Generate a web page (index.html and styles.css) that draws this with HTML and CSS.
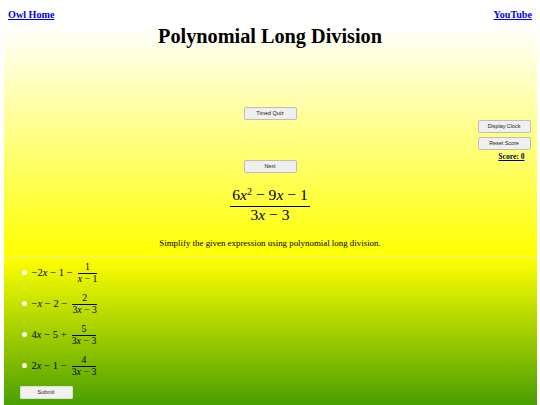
FILE: index.html
```html
<!DOCTYPE html>
<html lang="en">
<head>
<meta charset="utf-8">
<title>Polynomial Long Division</title>
<link rel="stylesheet" href="styles.css">
</head>
<body>
<nav class="topnav">
  <a href="#">Owl Home</a>
  <a href="#">YouTube</a>
</nav>
<main class="page">
  <section class="upper">
    <h1>Polynomial Long Division</h1>
    <div class="controls">
      <div class="center-col">
        <button class="btn">Timed Quiz</button>
        <button class="btn">Next</button>
      </div>
      <div class="side-col">
        <button class="btn">Display Clock</button>
        <button class="btn">Reset Score</button>
        <a class="score" href="#">Score: 0</a>
      </div>
    </div>
    <div class="problem">
      <span class="frac">
        <span class="num">6<i>x</i><sup>2</sup> − 9<i>x</i> − 1</span>
        <span class="den">3<i>x</i> − 3</span>
      </span>
    </div>
    <p class="prompt">Simplify the given expression using polynomial long division.</p>
  </section>
  <hr class="rule">
  <section class="lower">
    <form class="answers">
      <label class="answer"><span class="radio"></span><span class="expr">−2<i>x</i> − 1 −</span><span class="frac small"><span class="num">1</span><span class="den"><i>x</i> − 1</span></span></label>
      <label class="answer"><span class="radio"></span><span class="expr">−<i>x</i> − 2 −</span><span class="frac small"><span class="num">2</span><span class="den">3<i>x</i> − 3</span></span></label>
      <label class="answer"><span class="radio"></span><span class="expr">4<i>x</i> − 5 +</span><span class="frac small"><span class="num">5</span><span class="den">3<i>x</i> − 3</span></span></label>
      <label class="answer"><span class="radio"></span><span class="expr">2<i>x</i> − 1 −</span><span class="frac small"><span class="num">4</span><span class="den">3<i>x</i> − 3</span></span></label>
    </form>
    <button class="btn submit">Submit</button>
  </section>
</main>
</body>
</html>
```
FILE: styles.css
```css
* { box-sizing: border-box; }
html, body { margin: 0; padding: 0; height: 405px; overflow: hidden; background: #fff; }
body { font-family: "Liberation Serif", serif; color: #000; position: relative; }
.topnav { display: flex; justify-content: space-between; height: 26px; padding: 8px 8px 0 8px; font-size: 10.15px; font-weight: bold; line-height: 13px; }
.topnav a { color: #0000ee; }
.page { margin: 0 3.5px; height: 379px; display: flex; flex-direction: column; }
.upper { height: 231px; background: linear-gradient(#fff, #ff0); display: flex; flex-direction: column; }
h1 { margin: 0; text-align: center; font-size: 20.25px; line-height: 20px; font-weight: bold; }
.controls { display: grid; grid-template-columns: 1fr 53px 1fr; margin-top: 61px; height: 66px; }
.center-col { grid-column: 2; display: flex; flex-direction: column; gap: 40px; }
.side-col { grid-column: 3; justify-self: end; display: flex; flex-direction: column; gap: 4px; margin-top: 13px; margin-right: 6px; width: 53px; }
.btn { width: 53px; height: 13px; padding: 0; background: #efefef; border: 1px solid #bdbdbd; border-radius: 2px; font: 5.4px/1 "Liberation Sans", sans-serif; color: #222; display: block; }
.score { font-size: 7.6px; line-height: 9px; font-weight: bold; color: #000060; align-self: flex-end; margin-right: 6px; margin-top: -2px; }
.problem { display: flex; justify-content: center; margin-top: 13px; }
.frac { display: inline-flex; flex-direction: column; align-items: stretch; text-align: center; font-size: 15.6px; line-height: 17px; }
.frac .num { padding: 0 2px 3px; border-bottom: 0.7px solid #000; white-space: nowrap; }
.frac .den { margin-top: -1px; white-space: nowrap; }
sup { font-size: 10px; line-height: 0; vertical-align: 5px; }
.prompt { margin: 15px 0 0; text-align: center; font-size: 8.9px; line-height: 11px; }
.rule { margin: 0; height: 1px; border: 0; background: #e8e8a0; }
.lower { flex: 1; background: linear-gradient(#ff0, #4a9f00); padding: 3px 0 0 16px; display: flex; flex-direction: column; }
.answers { display: flex; flex-direction: column; gap: 7.6px; }
.answer { display: flex; align-items: center; gap: 3px; height: 23.4px; font-size: 10.6px; }
.radio { width: 5px; height: 5px; border-radius: 50%; background: #fff; margin: 0 2px; }
.expr { white-space: nowrap; }
.frac.small { font-size: 9.8px; line-height: 10px; margin-left: 2px; }
.frac.small .num { padding: 0 1px 1px; }
.frac.small .den { margin-top: 0; }
.submit { margin-top: 9px; background: #f0f0f0; border-color: #ddd; border-radius: 1px; }
```
